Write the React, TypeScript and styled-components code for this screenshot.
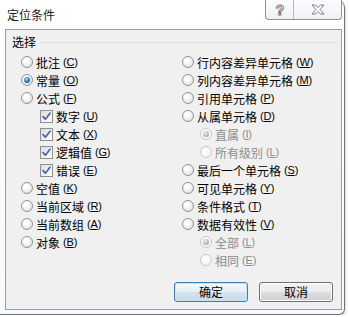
import styled, { createGlobalStyle } from "styled-components";

const GlobalStyle = createGlobalStyle`
  html, body {
    margin: 0;
    padding: 0;
    background: #ffffff;
  }
  body {
    font-family: "Noto Sans CJK SC", "Microsoft YaHei", sans-serif;
    font-size: 12px;
    color: #000;
  }
`;

const Window = styled.div`
  width: 345px;
  height: 315px;
  box-sizing: border-box;
  background: linear-gradient(180deg, #ffffff 0%, #f7f9fc 100%);
  border-right: 1px solid #70757c;
  border-bottom: 1px solid #70757c;
  border-top-right-radius: 8px;
  border-bottom-right-radius: 6px;
  box-shadow: 1px 1px 2px rgba(0, 0, 0, 0.15);
  display: flex;
  flex-direction: column;
`;

const TitleBar = styled.div`
  height: 29px;
  display: flex;
  align-items: flex-start;
  padding-left: 7px;
  flex-shrink: 0;
`;

const Title = styled.div`
  margin-top: 7px;
  font-size: 12px;
  line-height: 16px;
  color: #1a1a1a;
`;

const CaptionGroup = styled.div`
  margin-left: auto;
  margin-right: 2px;
  height: 19px;
  display: flex;
  border: 1px solid #8e9297;
  border-top: none;
  border-radius: 0 0 4px 4px;
  background: linear-gradient(180deg, #fdfdfd, #eef1f5);
  overflow: hidden;
`;

const CaptionButton = styled.div<{ $w: number; $last?: boolean }>`
  width: ${(p) => p.$w}px;
  height: 19px;
  display: flex;
  align-items: center;
  justify-content: center;
  border-right: ${(p) => (p.$last ? "none" : "1px solid #b7bbc1")};
  box-sizing: border-box;
`;

const Client = styled.div`
  flex: 1;
  margin: 0 2px 4px 5px;
  background: #f0f0f0;
  border: 1px solid #9d9d9d;
  display: flex;
  flex-direction: column;
`;

const Legend = styled.div`
  display: flex;
  align-items: center;
  padding: 5px 3px 0 6px;
  height: 14px;
`;

const LegendText = styled.span`
  line-height: 14px;
`;

const LegendLine = styled.div`
  flex: 1;
  height: 1px;
  background: #d9dde2;
  margin-left: 4px;
`;

const Options = styled.div`
  display: flex;
  padding-left: 15px;
  margin-top: 4px;
`;

const Column = styled.div<{ $w?: number }>`
  width: ${(p) => (p.$w ? `${p.$w}px` : "auto")};
  display: flex;
  flex-direction: column;
`;

const Row = styled.div<{ $indent?: number; $disabled?: boolean }>`
  height: 18px;
  display: flex;
  align-items: center;
  padding-left: ${(p) => p.$indent ?? 0}px;
  color: ${(p) => (p.$disabled ? "#8c8c8c" : "#000")};
  white-space: nowrap;
`;

const RadioDot = styled.span<{ $checked?: boolean; $disabled?: boolean }>`
  width: 12px;
  height: 12px;
  box-sizing: border-box;
  border-radius: 50%;
  flex-shrink: 0;
  margin-right: 3px;
  border: 1px solid ${(p) => (p.$disabled ? "#c9c9c9" : "#939393")};
  background: ${(p) =>
    p.$disabled
      ? "radial-gradient(circle at 40% 35%, #ffffff, #eeeeee)"
      : "radial-gradient(circle at 40% 35%, #ffffff 20%, #d6d6d6)"};
  display: flex;
  align-items: center;
  justify-content: center;

  &::after {
    content: "";
    display: ${(p) => (p.$checked ? "block" : "none")};
    width: 6px;
    height: 6px;
    border-radius: 50%;
    background: ${(p) =>
      p.$disabled
        ? "radial-gradient(circle at 40% 35%, #ececec, #a8a8a8 75%)"
        : "radial-gradient(circle at 40% 35%, #9ed8ff, #2a74b8 55%, #0c3f78)"};
  }
`;

const CheckBox = styled.span`
  width: 13px;
  height: 13px;
  box-sizing: border-box;
  flex-shrink: 0;
  margin-right: 3px;
  border: 1px solid #8e8f8f;
  background: linear-gradient(135deg, #dcdcdc, #ffffff);
  display: flex;
  align-items: center;
  justify-content: center;
`;

const Key = styled.span`
  font-family: "Liberation Sans", Arial, sans-serif;
  font-size: 11px;
  margin-left: 3px;
  letter-spacing: -0.2px;

  u {
    text-underline-offset: 1px;
  }
`;

const ButtonRow = styled.div`
  display: flex;
  justify-content: flex-end;
  gap: 11px;
  margin-top: 13px;
  padding-right: 8px;
`;

const Button = styled.div<{ $default?: boolean }>`
  width: 74px;
  height: 20px;
  box-sizing: border-box;
  border-radius: 3px;
  border: 1px solid ${(p) => (p.$default ? "#3c7fb1" : "#707070")};
  background: ${(p) =>
    p.$default
      ? "linear-gradient(180deg, #f4f9fc 0%, #e6f0f6 48%, #d4e3ee 52%, #c9dbe9 100%)"
      : "linear-gradient(180deg, #f2f2f2 0%, #ebebeb 48%, #dddddd 52%, #cfcfcf 100%)"};
  box-shadow: ${(p) =>
    p.$default ? "inset 0 0 0 1px #bfe6fb" : "inset 0 0 0 1px #fcfcfc"};
  display: flex;
  align-items: center;
  justify-content: center;
  font-size: 12px;
  line-height: 16px;
`;

type Item = {
  label: string;
  k: string;
  kind?: "radio" | "check";
  checked?: boolean;
  disabled?: boolean;
  indent?: number;
};

const leftItems: Item[] = [
  { label: "批注", k: "C" },
  { label: "常量", k: "O", checked: true },
  { label: "公式", k: "F" },
  { label: "数字", k: "U", kind: "check", checked: true, indent: 19 },
  { label: "文本", k: "X", kind: "check", checked: true, indent: 19 },
  { label: "逻辑值", k: "G", kind: "check", checked: true, indent: 19 },
  { label: "错误", k: "E", kind: "check", checked: true, indent: 19 },
  { label: "空值", k: "K" },
  { label: "当前区域", k: "R" },
  { label: "当前数组", k: "A" },
  { label: "对象", k: "B" },
];

const rightItems: Item[] = [
  { label: "行内容差异单元格", k: "W" },
  { label: "列内容差异单元格", k: "M" },
  { label: "引用单元格", k: "P" },
  { label: "从属单元格", k: "D" },
  { label: "直属", k: "I", checked: true, disabled: true, indent: 18 },
  { label: "所有级别", k: "L", disabled: true, indent: 18 },
  { label: "最后一个单元格", k: "S" },
  { label: "可见单元格", k: "Y" },
  { label: "条件格式", k: "T" },
  { label: "数据有效性", k: "V" },
  { label: "全部", k: "L", checked: true, disabled: true, indent: 18 },
  { label: "相同", k: "E", disabled: true, indent: 18 },
];

const CheckMark = () => (
  <svg width="9" height="9" viewBox="0 0 9 9">
    <path
      d="M1 4.6 L3.4 7.2 L8 1.2"
      fill="none"
      stroke="#4864a8"
      strokeWidth="1.7"
      strokeLinecap="round"
      strokeLinejoin="round"
    />
  </svg>
);

const HelpIcon = () => (
  <svg width="12" height="14" viewBox="0 0 12 14">
    <text
      x="6"
      y="12"
      textAnchor="middle"
      fontFamily="Liberation Sans, Arial, sans-serif"
      fontWeight="bold"
      fontSize="14"
      fill="#ffffff"
      stroke="#6a6f76"
      strokeWidth="0.9"
    >
      ?
    </text>
  </svg>
);

const CloseIcon = () => (
  <svg width="14" height="11" viewBox="0 0 14 11">
    <path
      d="M1 1 H4.5 L7 3.6 L9.5 1 H13 L9 5.5 L13 10 H9.5 L7 7.4 L4.5 10 H1 L5 5.5 Z"
      fill="#ffffff"
      stroke="#6a6f76"
      strokeWidth="0.9"
      strokeLinejoin="round"
    />
  </svg>
);

const OptionRow = ({ item }: { item: Item }) => (
  <Row $indent={item.indent} $disabled={item.disabled}>
    {item.kind === "check" ? (
      <CheckBox>{item.checked && <CheckMark />}</CheckBox>
    ) : (
      <RadioDot $checked={item.checked} $disabled={item.disabled} />
    )}
    <span>{item.label}</span>
    <Key>
      (<u>{item.k}</u>)
    </Key>
  </Row>
);

export default function App() {
  return (
    <>
      <GlobalStyle />
      <Window>
        <TitleBar>
          <Title>定位条件</Title>
          <CaptionGroup>
            <CaptionButton $w={28}>
              <HelpIcon />
            </CaptionButton>
            <CaptionButton $w={47} $last>
              <CloseIcon />
            </CaptionButton>
          </CaptionGroup>
        </TitleBar>
        <Client>
          <Legend>
            <LegendText>选择</LegendText>
            <LegendLine />
          </Legend>
          <Options>
            <Column $w={161}>
              {leftItems.map((it) => (
                <OptionRow key={it.label} item={it} />
              ))}
            </Column>
            <Column>
              {rightItems.map((it) => (
                <OptionRow key={it.label} item={it} />
              ))}
            </Column>
          </Options>
          <ButtonRow>
            <Button $default>确定</Button>
            <Button>取消</Button>
          </ButtonRow>
        </Client>
      </Window>
    </>
  );
}
